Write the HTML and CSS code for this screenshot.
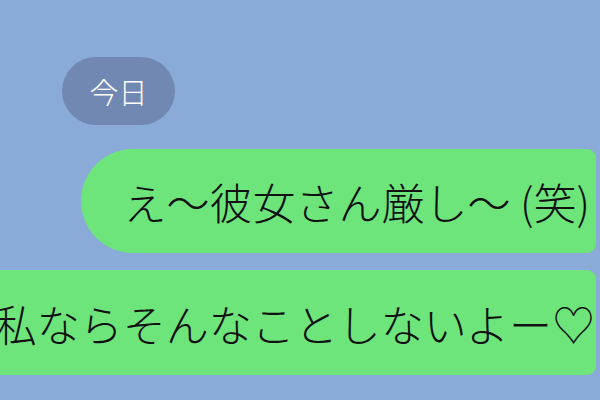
FILE: index.html
```html
<!DOCTYPE html>
<html lang="ja">
<head>
    <meta charset="UTF-8">
    <meta name="viewport" content="width=device-width, initial-scale=1.0">
    <title>トーク</title>
    <link rel="stylesheet" href="styles.css">
</head>
<body>
    <div class="chat">
        <div class="date-pill">今日</div>

        <div class="bubble bubble-first">え〜彼女さん厳し〜 (笑)</div>
        <div class="bubble bubble-second">私ならそんなことしないよー♡</div>
    </div>
</body>
</html>
```

FILE: styles.css
```css
body {
    font-family: "Noto Sans CJK JP", "Noto Sans", sans-serif;
    background-color: #8aaad8;
    margin: 0;
    padding: 0;
    height: 100vh;
    overflow: hidden;
}

.chat {
    display: flex;
    flex-direction: column;
    align-items: flex-end;
    padding: 57px 4px 0 0;
}

.date-pill {
    align-self: flex-start;
    margin-left: 62px;
    width: 113px;
    height: 68px;
    border-radius: 34px;
    background-color: #7189b2;
    color: #fff;
    font-size: 29px;
    font-weight: 300;
    display: flex;
    justify-content: center;
    align-items: center;
}

.bubble {
    display: flex;
    align-items: center;
    height: 104px;
    background-color: #6ee57b;
    color: #111;
    font-size: 43px;
    font-weight: 300;
    white-space: nowrap;
    box-sizing: border-box;
}

.bubble-first {
    margin-top: 24px;
    padding: 0 6px 0 42px;
    border-radius: 52px 9px 9px 52px;
}

.bubble-second {
    margin-top: 17px;
    height: 105px;
    padding: 0 1px 0 45px;
    border-radius: 52px 9px 9px 52px;
}
```
